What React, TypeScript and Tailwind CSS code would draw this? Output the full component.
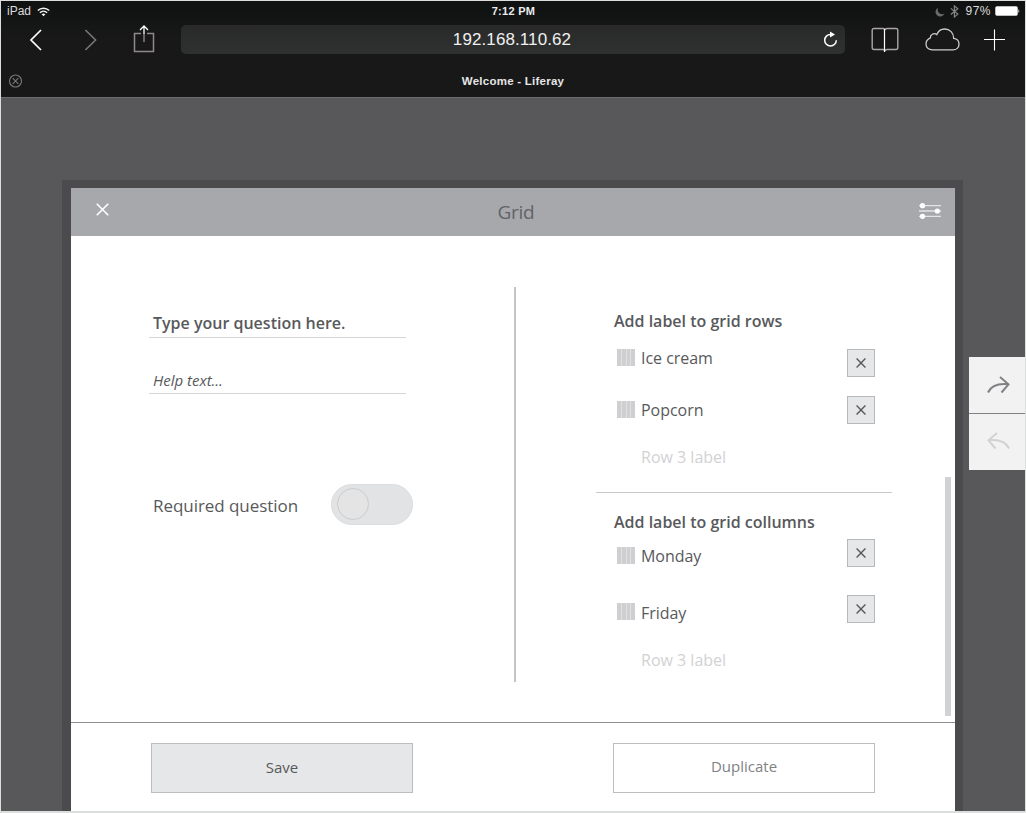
import type { ReactNode } from "react";

function StatusBar() {
  return (
    <div className="grid h-[21px] grid-cols-3 items-center pr-[5px] pl-[6px] text-[11px] leading-[21px] text-[#dcdcdc]">
      <div className="flex items-center gap-[6px]">
        <span className="text-[12px]">iPad</span>
        <svg width="13" height="10" viewBox="0 0 13 10" fill="none" stroke="#f2f2f2" strokeWidth="1.5">
          <path d="M0.8 3.6C4 0.3 9 0.3 12.2 3.6" />
          <path d="M2.9 5.8C5 3.7 8 3.7 10.1 5.8" />
          <path d="M4.6 7.3C5.6 6.3 7.4 6.3 8.4 7.3L6.5 9.3Z" fill="#f2f2f2" stroke="none" />
        </svg>
      </div>
      <div className="text-center font-bold tracking-[0.3px] text-[#ececec]">7:12 PM</div>
      <div className="flex items-center justify-end">
        <svg width="10" height="10" viewBox="0 0 10 10" className="mr-[5px]">
          <path d="M3.2 0.6A4.7 4.7 0 1 0 9.6 6.6A4.6 4.6 0 0 1 3.2 0.6Z" fill="#6a6a6a" />
        </svg>
        <svg width="9" height="13" viewBox="0 0 9 13" fill="none" stroke="#858585" strokeWidth="1.2" className="mr-[6px]">
          <path d="M0.8 3.4L7.8 9.1L4.4 12V0.9L7.8 3.7L0.8 9.5" />
        </svg>
        <span className="mr-[4px] text-[12px] tracking-[0.5px]">97%</span>
        <svg width="25" height="10" viewBox="0 0 25 10" className="-mt-px">
          <rect x="0.5" y="0.5" width="22" height="9" rx="1.5" fill="none" stroke="#bdbdbd" />
          <rect x="1" y="1" width="21" height="8" fill="#ffffff" />
          <path d="M23.4 3.2V6.8C24.6 6.4 24.6 3.6 23.4 3.2Z" fill="#dddddd" />
        </svg>
      </div>
    </div>
  );
}

function Toolbar() {
  return (
    <div className="flex h-[39px] items-start pt-[3px]">
      <svg width="13" height="22" viewBox="0 0 13 22" fill="none" stroke="#ffffff" strokeWidth="1.7" className="mt-[4px] ml-[28px]">
        <path d="M12 1L2 11L12 21" />
      </svg>
      <svg width="13" height="22" viewBox="0 0 13 22" fill="none" stroke="#777777" strokeWidth="1.6" className="mt-[4px] ml-[42px]">
        <path d="M1.4 1L11.6 11L1.4 21" />
      </svg>
      <svg width="22" height="28" viewBox="0 0 22 28" fill="none" className="ml-[36px]">
        <path d="M8 8.500H1.500V26.500H20.500V8.500H14" stroke="#8f8989" strokeWidth="1.500" />
        <path d="M11 9V17" stroke="#8f8989" strokeWidth="1.400" />
        <path d="M11 1V9M7 5L11 1L15 5" stroke="#ffffff" strokeWidth="1.300" />
      </svg>
      <div className="ml-[26px] flex h-[29px] w-[664px] items-center rounded-[5px] bg-linear-to-b from-[#292929] to-[#2f3131] pr-[7px] pl-[20px]">
        <span className="flex-1 text-center text-[17px] leading-[29px] tracking-[0.100px] text-[#f0f0f0]">192.168.110.62</span>
        <svg width="15" height="17" viewBox="0 0 15 17" fill="none">
          <path d="M7.5 3.4A5.8 5.8 0 1 0 13.3 9.2" stroke="#ffffff" strokeWidth="1.5" />
          <path d="M7 0.4L12 3.4L7 6.4Z" fill="#ffffff" />
        </svg>
      </div>
      <svg width="28" height="26" viewBox="0 0 28 26" fill="none" className="mt-[2px] ml-[26px]">
        <path d="M14 2.5C13.4 1.8 12.8 1.5 11.8 1.5H3C1.8 1.5 1.2 2.1 1.2 3.2V20.6C1.2 21.8 1.8 22.5 3 22.5H11.8C12.8 22.5 13.4 22.8 14 23.6C14.6 22.8 15.2 22.5 16.2 22.5H25C26.2 22.5 26.8 21.8 26.8 20.6V3.2C26.8 2.1 26.2 1.5 25 1.5H16.2C15.2 1.5 14.6 1.8 14 2.5Z" stroke="#aaa6a6" strokeWidth="1.4" />
        <path d="M13.500 2V25" stroke="#ffffff" strokeWidth="1.2" />
      </svg>
      <svg width="35" height="24" viewBox="0 0 35 24" fill="none" stroke="#cfcccc" strokeWidth="1.3" className="mt-[3px] ml-[26px]">
        <path d="M7.5 21.800C3.8 21.800 1 19.600 1 16.1C1 13.0 2.9 10.800 5.4 9.800C5 6.800 8.8 4.400 11.800 6.600C13.200 3 16.300 1 19.600 1C24.800 1 28.800 4.900 28.700 10.400C31.900 10.800 34 13.100 34 16.200C34 19.600 31.400 21.800 28 21.800Z" />
      </svg>
      <svg width="22" height="22" viewBox="0 0 22 22" stroke="#ffffff" strokeWidth="1.1" className="mt-[4px] ml-[23px]">
        <path d="M11.500 0.500V21.500M1 10.500H22" />
      </svg>
    </div>
  );
}

function TabBar() {
  return (
    <div className="flex h-[36px] items-center pl-[7px]">
      <svg width="14" height="14" viewBox="0 0 14 14" fill="none" stroke="#777777" strokeWidth="1.1" className="mt-[4px]">
        <circle cx="7.500" cy="7" r="6" />
        <path d="M4.700 4.200L10.300 9.800M10.300 4.200L4.700 9.800" />
      </svg>
      <span className="mt-[5px] flex-1 pr-[21px] text-center text-[11.500px] font-bold tracking-[0.250px] text-[#e6e6e6]">Welcome - Liferay</span>
    </div>
  );
}

function Cross({ size, stroke, width }: { size: number; stroke: string; width: number }) {
  return (
    <svg width={size} height={size} viewBox="0 0 12 12" fill="none" stroke={stroke} strokeWidth={width}>
      <path d="M0.700 0.700L11.300 11.300M11.300 0.700L0.700 11.300" />
    </svg>
  );
}

function Grip({ className }: { className: string }) {
  return (
    <span className={`flex h-[17px] w-[18px] shrink-0 gap-px bg-[#e0e0e2] ${className}`}>
      <i className="flex-1 bg-[#cfcfd1]" />
      <i className="flex-1 bg-[#cfcfd1]" />
      <i className="flex-1 bg-[#cfcfd1]" />
      <i className="flex-1 bg-[#cfcfd1]" />
    </span>
  );
}

function LabelRow({ label, row, grip, text, box }: { label: string; row: string; grip: string; text: string; box: string }) {
  return (
    <div className={`flex items-start pr-[17px] pl-[21px] ${row}`}>
      <Grip className={grip} />
      <span className={`ml-[6px] flex-1 text-[16px] leading-6 tracking-[-0.030px] text-[#58595b] ${text}`}>{label}</span>
      <button className={`flex h-[28px] w-[28px] items-center justify-center border-[1.500px] border-[#b7b8ba] bg-[#e6e7e8] ${box}`}>
        <Cross size={10} stroke="#58595b" width={1.700} />
      </button>
    </div>
  );
}

function GroupTitle({ children }: { children: ReactNode }) {
  return <h2 className="pl-[18px] text-[16px] leading-6 font-semibold text-[#58595b]">{children}</h2>;
}

function Placeholder() {
  return <div className="pl-[45px] text-[16px] leading-6 text-[#d1d2d4]">Row 3 label</div>;
}

function QuestionPane() {
  return (
    <section className="w-[443px] pt-[75px] pl-[78px]">
      <div className="h-[27px] w-[257px] border-b border-[#d4d5d6] pl-[4px] text-[16px] leading-6 font-semibold text-[#58595b]">Type your question here.</div>
      <div className="mt-[30px] h-[26px] w-[257px] border-b border-[#d4d5d6] pl-[4px] text-[15px] leading-6 text-[#58595b] italic">Help text...</div>
      <div className="mt-[90px] flex h-[41px] w-[264px] items-center justify-between pl-[4px]">
        <span className="mt-[3px] text-[17px] leading-6 tracking-[-0.050px] text-[#58595b]">Required question</span>
        <span className="-mt-px flex h-[41px] w-[82px] items-center rounded-full border border-[#dcddde] bg-[#e2e3e4] pl-[5px]">
          <i className="h-[32px] w-[32px] rounded-full border border-[#cbcccd] bg-[#e4e4e4]" />
        </span>
      </div>
    </section>
  );
}

function LabelsPane() {
  return (
    <section className="ml-[80px] w-[296px] pt-[73px]">
      <GroupTitle>Add label to grid rows</GroupTitle>
      <LabelRow label="Ice cream" row="mt-[12px] h-[51px]" grip="mt-[4px]" text="mt-px" box="mt-[4px]" />
      <LabelRow label="Popcorn" row="h-[49px]" grip="mt-[5px]" text="mt-[2px]" box="mt-0" />
      <Placeholder />
      <hr className="mt-[23px] mb-[17px] border-t border-[#c7c8ca]" />
      <GroupTitle>Add label to grid collumns</GroupTitle>
      <LabelRow label="Monday" row="mt-[5px] h-[56px]" grip="mt-[8px]" text="mt-[5px]" box="mt-0" />
      <LabelRow label="Friday" row="h-[53px]" grip="mt-[8px]" text="mt-[6px]" box="mt-0" />
      <Placeholder />
    </section>
  );
}

function Dialog() {
  return (
    <main className="mt-[82px] flex w-[901px] flex-col border-t-[8px] border-r-[8px] border-l-[9px] border-[#4b4b4d] bg-white">
      <header className="flex h-[48px] items-start justify-between bg-[#a7a8ac] pr-[14px] pl-[25px]">
        <span className="pt-[15px]"><Cross size={13} stroke="#ffffff" width={1.500} /></span>
        <h1 className="ml-[4px] pt-[12px] text-[19px] leading-6 tracking-[-0.300px] text-[#626366]">Grid</h1>
        <svg width="22" height="16" viewBox="0 0 22 16" className="mt-[15px]" fill="#ffffff" stroke="#e4e4e6" strokeWidth="1.300">
          <path d="M0 2.700H22M0 8H22M0 13.300H22" />
          <g stroke="none">
            <circle cx="3.500" cy="2.700" r="2.600" />
            <circle cx="18.300" cy="8" r="2.600" />
            <circle cx="3.500" cy="13.300" r="2.600" />
          </g>
        </svg>
      </header>
      <div className="flex h-[486px]">
        <QuestionPane />
        <div className="mt-[51px] h-[395px] w-[2px] bg-[#c3c4c6]" />
        <LabelsPane />
        <div className="mt-[241px] ml-[53px] h-[239px] w-[6px] bg-[#d1d2d4]" />
      </div>
      <footer className="flex flex-1 justify-between border-t border-[#8f9093] pt-[20px] pr-[80px] pl-[80px]">
        <button className="flex h-[50px] w-[262px] items-center justify-center border border-[#bcbdbf] bg-[#e6e7e8] pb-[2px] text-[15px] text-[#58595b]">Save</button>
        <button className="flex h-[50px] w-[262px] items-center justify-center border border-[#bcbdbf] bg-white pb-[4px] text-[15px] text-[#808184]">Duplicate</button>
      </footer>
    </main>
  );
}

function HistoryButtons() {
  return (
    <aside className="mt-[259px] ml-[6px] h-[113px] w-[56px] bg-[#f2f2f2]">
      <button className="flex h-[57px] w-full items-center justify-center border-b border-[#808184] pb-px pl-[3px]">
        <svg width="23" height="18" viewBox="0 0 23 18" fill="none" stroke="#808184" strokeWidth="2">
          <path d="M1 16.500C4 10 10 7.300 21 8.300M13 1L21.500 8.300L14.500 16.500" />
        </svg>
      </button>
      <button className="flex h-[56px] w-full items-center justify-center pb-[2px] pl-[2px]">
        <svg width="23" height="18" viewBox="0 0 23 18" fill="none" stroke="#d1d2d4" strokeWidth="2">
          <path d="M22 16.500C19 10 13 7.300 2 8.300M10 1L1.500 8.300L8.500 16.500" />
        </svg>
      </button>
    </aside>
  );
}

export default function App() {
  return (
    <div className="flex h-[813px] w-[1026px] flex-col overflow-hidden border border-b-2 border-[#dcdedd] bg-[#58585a]">
      <div className="h-[97px] border-b border-[#6c6c6e] bg-linear-to-b from-[#0f1211] via-[#181818] via-40% to-[#181818] font-['Liberation_Sans',Arial,sans-serif]">
        <StatusBar />
        <Toolbar />
        <TabBar />
      </div>
      <div className="flex flex-1 pl-[61px] font-['Open_Sans',sans-serif]">
        <Dialog />
        <HistoryButtons />
      </div>
    </div>
  );
}
